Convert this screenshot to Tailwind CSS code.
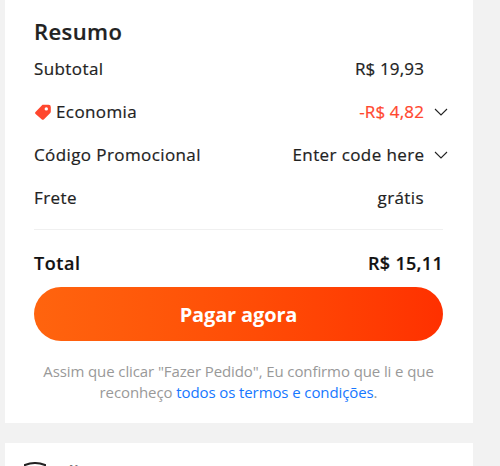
<!DOCTYPE html>
<html lang="pt-BR">
<head>
<meta charset="utf-8">
<title>Resumo</title>
<script src="https://cdn.jsdelivr.net/npm/@tailwindcss/browser@4"></script>
</head>
<body class="h-[466px] w-[500px] overflow-hidden bg-[#f2f2f2] pl-[5px] font-['Open_Sans',sans-serif] text-[#222]">
<main class="flex w-[468px] flex-col gap-5">
  <section class="h-[423px] bg-white pt-[15px] pl-[29px]">
    <h1 class="h-[32px] text-[22px] leading-[32px] font-semibold tracking-[0.4px] [-webkit-text-stroke:0.2px]">Resumo</h1>
    <dl class="flex w-[414px] flex-col text-[17px] leading-[43px] tracking-[0.4px] [-webkit-text-stroke:0.2px]">
      <div class="flex h-[43px] justify-between pr-[24px]"><dt>Subtotal</dt><dd class="tracking-[0.15px]">R$ 19,93</dd></div>
      <div class="flex h-[43px] items-center justify-between"><dt class="flex items-center gap-[5px]"><svg class="h-4 w-[17px]" viewBox="0 0 17 16"><path fill="#ff472e" fill-rule="evenodd" d="M8.500 .8H14.500Q16.800 .8 16.800 3V7.600Q16.800 8.500 16 9.300L10 15.200q-1.200 1-2.400 0L1.600 10q-1-1-.1-2zM12.300 3.200a1.700 1.700 0 1 0 0 3.400 1.700 1.700 0 0 0 0-3.400z"/></svg>Economia</dt><dd class="flex items-center gap-[10px] tracking-[0.15px] text-[#ff472e]">-R$ 4,82<svg class="h-2 w-[14px]" viewBox="0 0 14 8" fill="none" stroke="#222" stroke-width="1.100"><path d="m1 1 6 6 6-6"/></svg></dd></div>
      <div class="flex h-[43px] items-center justify-between"><dt>Código Promocional</dt><dd class="flex items-center gap-[9.500px]">Enter code here<svg class="h-2 w-[14px]" viewBox="0 0 14 8" fill="none" stroke="#222" stroke-width="1.100"><path d="m1 1 6 6 6-6"/></svg></dd></div>
      <div class="flex h-[43px] justify-between pr-[24px]"><dt>Frete</dt><dd>grátis</dd></div>
    </dl>
    <div class="mt-[10px] w-[409px] border-t border-[#f0f0f0]"></div>
    <div class="mt-[16px] flex h-[34px] w-[409px] justify-between text-[18px] leading-[34px] font-semibold text-[#111] [-webkit-text-stroke:0.2px]"><span class="tracking-[0.6px]">Total</span><span class="tracking-[0.3px]">R$ 15,11</span></div>
    <button class="mt-[7px] block h-[54px] w-[409px] rounded-full bg-linear-to-r from-[#ff640e] to-[#ff3000] pt-[2px] text-[20px] font-bold tracking-[-0.15px] text-white">Pagar agora</button>
    <p class="mt-[20px] w-[409px] text-center text-[15px] leading-[21px] tracking-[-0.1px] text-[#999]">Assim que clicar "Fazer Pedido", Eu confirmo que li e que<br>reconheço <a class="text-[#1677ff]">todos os termos e condições</a>.</p>
  </section>
  <section class="flex h-[23px] gap-[9px] overflow-hidden bg-white pt-[15px] pl-[18px]">
    <svg class="mt-[4px] h-6 w-6 shrink-0" viewBox="0 0 24 24" fill="none" stroke="#222" stroke-width="2"><path d="M2 3Q12-1 22 3v10q0 6-10 10Q2 19 2 13z"/></svg>
    <span class="text-[19px] leading-[30px] font-semibold text-[#777]">AliExpress</span>
  </section>
</main>
</body>
</html>
